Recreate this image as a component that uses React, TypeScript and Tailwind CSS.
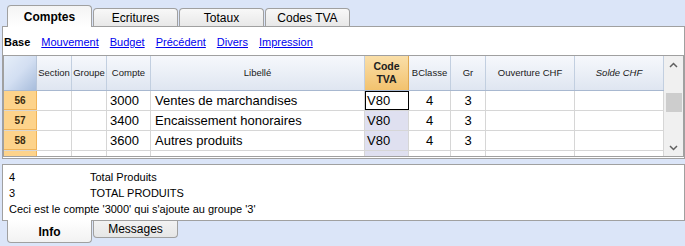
const cols = [
  { label: 'Section', w: 'w-[35px]' },
  { label: 'Groupe', w: 'w-[35px]' },
  { label: 'Compte', w: 'w-[44px]' },
  { label: 'Libellé', w: 'w-[214px]' },
]

const rows = [
  { n: '56', compte: '3000', libelle: 'Ventes de marchandises', tva: 'V80', bclasse: '4', gr: '3', selected: true },
  { n: '57', compte: '3400', libelle: 'Encaissement honoraires', tva: 'V80', bclasse: '4', gr: '3' },
  { n: '58', compte: '3600', libelle: 'Autres produits', tva: 'V80', bclasse: '4', gr: '3' },
]

function TopTab({ label, active }: { label: string; active?: boolean }) {
  if (active) {
    return (
      <div className="relative z-10 -mb-px flex h-[22px] w-[85px] items-center justify-center rounded-t-[4px] border border-b-0 border-[#a0a0a0] bg-gradient-to-b from-[#f4f4f4] to-white text-[12px] font-bold text-black">
        {label}
      </div>
    )
  }
  return (
    <div className="flex h-[18px] w-[85px] items-center justify-center rounded-t-[4px] border border-b-0 border-[#a0a0a0] bg-gradient-to-b from-[#f8f8f8] to-[#e8e8e8] text-[12px] text-black">
      {label}
    </div>
  )
}

function Chevron({ up }: { up?: boolean }) {
  return (
    <svg width="9" height="6" viewBox="0 0 9 6" className="text-[#606060]">
      <path d={up ? 'M1 5 L4.5 1.5 L8 5' : 'M1 1 L4.5 4.5 L8 1'} fill="none" stroke="currentColor" strokeWidth="1.5" />
    </svg>
  )
}

export default function App() {
  return (
    <div className="relative h-[246px] w-[685px] overflow-hidden bg-[#dbe5f8] font-['Liberation_Sans',Arial,sans-serif] text-black">
      <div className="flex h-[26px] items-end gap-[1px] pl-[7px]">
        <TopTab label="Comptes" active />
        <TopTab label="Ecritures" />
        <TopTab label="Totaux" />
        <TopTab label="Codes TVA" />
      </div>

      <div className="ml-[2px] flex h-[133px] flex-col border border-[#a0a0a0] bg-white">
        <div className="flex h-[28px] items-center gap-[11px] pl-[1px] pt-[3px] text-[11px]">
          <span className="font-bold">Base</span>
          <span className="text-[#0000ee] underline">Mouvement</span>
          <span className="text-[#0000ee] underline">Budget</span>
          <span className="text-[#0000ee] underline">Précédent</span>
          <span className="text-[#0000ee] underline">Divers</span>
          <span className="text-[#0000ee] underline">Impression</span>
        </div>

        <div className="flex h-[102px] overflow-hidden border border-[#a0a0a0]">
          <div className="flex w-[660px] flex-col">
            <div className="flex h-[35px] shrink-0 border-b border-[#a8b8d0] bg-gradient-to-b from-[#f6f8fc] to-[#dfe6f1] text-[9.5px] text-[#202020]">
              <div className="w-[33px] border-r border-[#b8c6da] bg-gradient-to-br from-[#e6eef9] via-[#d3dff2] to-[#a8bddc]" />
              {cols.map((c) => (
                <div key={c.label} className={`${c.w} flex items-center justify-center border-r border-[#c2cfe0]`}>
                  {c.label}
                </div>
              ))}
              <div className="flex w-[44px] flex-col items-center justify-center border-r border-[#e0a850] bg-gradient-to-b from-[#fadfa8] to-[#f2c26e] text-[10.5px] font-bold leading-[13px]">
                <span>Code</span>
                <span>TVA</span>
              </div>
              <div className="flex w-[42px] items-center justify-center border-r border-[#c2cfe0]">BClasse</div>
              <div className="flex w-[35px] items-center justify-center border-r border-[#c2cfe0]">Gr</div>
              <div className="flex w-[89px] items-center justify-center border-r border-[#c2cfe0]">Ouverture CHF</div>
              <div className="flex w-[89px] items-center justify-center border-r border-[#c2cfe0] italic">Solde CHF</div>
            </div>

            {rows.map((r) => (
              <div key={r.n} className="flex h-[20px] shrink-0 border-b border-[#d6d6d6] text-[13px]">
                <div className="flex w-[33px] items-center justify-center border-b border-r border-[#f0b45a] bg-[#fdd38b] text-[10px] font-bold text-[#3a2c10]">
                  {r.n}
                </div>
                <div className="w-[35px] border-r border-[#d6d6d6]" />
                <div className="w-[35px] border-r border-[#d6d6d6]" />
                <div className="flex w-[44px] items-center border-r border-[#d6d6d6] pl-[3px]">{r.compte}</div>
                <div className="flex w-[214px] items-center border-r border-[#d6d6d6] pl-[4px]">{r.libelle}</div>
                {r.selected ? (
                  <div className="flex w-[44px] items-center border border-black bg-white pl-[1px]">{r.tva}</div>
                ) : (
                  <div className="flex w-[44px] items-center border-r border-[#d6d6d6] bg-[#dfe0f0] pl-[2px]">{r.tva}</div>
                )}
                <div className="flex w-[42px] items-center justify-center border-r border-[#d6d6d6]">{r.bclasse}</div>
                <div className="flex w-[35px] items-center justify-center border-r border-[#d6d6d6]">{r.gr}</div>
                <div className="w-[89px] border-r border-[#d6d6d6]" />
                <div className="w-[89px] border-r border-[#d6d6d6]" />
              </div>
            ))}

            <div className="flex h-[20px] shrink-0">
              <div className="w-[33px] border-r border-[#f0b45a] bg-[#fdd38b]" />
              <div className="w-[35px] border-r border-[#d6d6d6]" />
              <div className="w-[35px] border-r border-[#d6d6d6]" />
              <div className="w-[44px] border-r border-[#d6d6d6]" />
              <div className="w-[214px] border-r border-[#d6d6d6]" />
              <div className="w-[44px] border-r border-[#d6d6d6] bg-[#dfe0f0]" />
              <div className="w-[42px] border-r border-[#d6d6d6]" />
              <div className="w-[35px] border-r border-[#d6d6d6]" />
              <div className="w-[89px] border-r border-[#d6d6d6]" />
              <div className="w-[89px] border-r border-[#d6d6d6]" />
            </div>
          </div>

          <div className="flex w-[19px] flex-col items-center bg-[#f0f0f0]">
            <div className="flex h-[17px] items-center justify-center">
              <Chevron up />
            </div>
            <div className="mt-[20px] h-[19px] w-[16px] bg-[#cdcdcd]" />
            <div className="flex-1" />
            <div className="flex h-[17px] items-center justify-center">
              <Chevron />
            </div>
          </div>
        </div>
      </div>

      <div className="ml-[2px] mt-[5px] flex h-[57px] flex-col border border-[#a0a0a0] bg-white pl-[6px] pt-[4px] text-[11px] leading-[16px]">
        <div className="flex">
          <span className="w-[81px]">4</span>
          <span>Total Produits</span>
        </div>
        <div className="flex">
          <span className="w-[81px]">3</span>
          <span>TOTAL PRODUITS</span>
        </div>
        <div>Ceci est le compte '3000' qui s'ajoute au groupe '3'</div>
      </div>

      <div className="flex items-start gap-[1px] pl-[7px]">
        <div className="relative z-10 -mt-px flex h-[23px] w-[85px] items-center justify-center rounded-b-[4px] border border-t-0 border-[#a0a0a0] bg-gradient-to-b from-white to-[#f2f2f2] pt-[1px] text-[12px] font-bold">
          Info
        </div>
        <div className="flex h-[17px] w-[85px] items-center justify-center rounded-b-[4px] border border-t-0 border-[#a0a0a0] bg-gradient-to-b from-[#f2f2f2] to-[#e6e6e6] text-[12px]">
          Messages
        </div>
      </div>
    </div>
  )
}
